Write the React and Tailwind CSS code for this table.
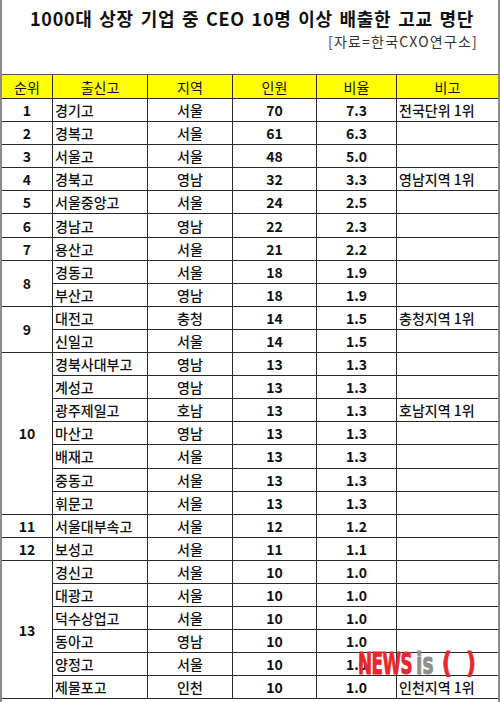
import React from "react";

const rows = [
  { rank: "1", span: 1, items: [["경기고", "서울", "70", "7.3", "전국단위 1위"]] },
  { rank: "2", span: 1, items: [["경복고", "서울", "61", "6.3", ""]] },
  { rank: "3", span: 1, items: [["서울고", "서울", "48", "5.0", ""]] },
  { rank: "4", span: 1, items: [["경북고", "영남", "32", "3.3", "영남지역 1위"]] },
  { rank: "5", span: 1, items: [["서울중앙고", "서울", "24", "2.5", ""]] },
  { rank: "6", span: 1, items: [["경남고", "영남", "22", "2.3", ""]] },
  { rank: "7", span: 1, items: [["용산고", "서울", "21", "2.2", ""]] },
  {
    rank: "8",
    span: 2,
    items: [
      ["경동고", "서울", "18", "1.9", ""],
      ["부산고", "영남", "18", "1.9", ""],
    ],
  },
  {
    rank: "9",
    span: 2,
    items: [
      ["대전고", "충청", "14", "1.5", "충청지역 1위"],
      ["신일고", "서울", "14", "1.5", ""],
    ],
  },
  {
    rank: "10",
    span: 7,
    items: [
      ["경북사대부고", "영남", "13", "1.3", ""],
      ["계성고", "영남", "13", "1.3", ""],
      ["광주제일고", "호남", "13", "1.3", "호남지역 1위"],
      ["마산고", "영남", "13", "1.3", ""],
      ["배재고", "서울", "13", "1.3", ""],
      ["중동고", "서울", "13", "1.3", ""],
      ["휘문고", "서울", "13", "1.3", ""],
    ],
  },
  { rank: "11", span: 1, items: [["서울대부속고", "서울", "12", "1.2", ""]] },
  { rank: "12", span: 1, items: [["보성고", "서울", "11", "1.1", ""]] },
  {
    rank: "13",
    span: 6,
    items: [
      ["경신고", "서울", "10", "1.0", ""],
      ["대광고", "서울", "10", "1.0", ""],
      ["덕수상업고", "서울", "10", "1.0", ""],
      ["동아고", "영남", "10", "1.0", ""],
      ["양정고", "서울", "10", "1.0", ""],
      ["제물포고", "인천", "10", "1.0", "인천지역 1위"],
    ],
  },
];

// spans used: row-span-1 row-span-2 row-span-6 row-span-7
const spanClass = {
  1: "row-span-1",
  2: "row-span-2",
  6: "row-span-6",
  7: "row-span-7",
};

const cell = "flex items-center border-b border-[#2a2a2a]";
const wmFont = { fontFamily: '"DejaVu Sans", sans-serif' };

export default function App() {
  return (
    <div
      className="relative w-[500px] h-[702px] bg-white text-[#111] overflow-hidden"
      style={{ fontFamily: '"Noto Sans CJK KR", "Noto Sans", sans-serif' }}
    >
      <div className="h-[702px] border-x-2 border-[#8a8a8a]">
        {/* title */}
        <div className="h-[75px] border-b border-[#555] flex flex-col">
          <h1 className="mt-[5px] pl-[4px] text-center text-[18px] font-bold leading-[26px] tracking-[0.7px] [word-spacing:2px]">
            1000대 상장 기업 중 CEO 10명 이상 배출한 고교 명단
          </h1>
          <div className="pr-[20px] text-right text-[14px] leading-[20px] tracking-[1.2px] text-[#333]">
            [자료=한국CXO연구소]
          </div>
        </div>

        {/* table */}
        <div className="grid grid-cols-[51px_95px_85px_84px_80px_101px] grid-rows-[24px] auto-rows-[23.1px] text-[14px] leading-none">
          {["순위", "출신고", "지역", "인원", "비율", "비고"].map((h, i) => (
            <div
              key={h}
              className={`${cell} h-[24px] justify-center bg-[#ffff00] ${i < 5 ? "border-r" : ""}`}
            >
              {h}
            </div>
          ))}

          {rows.map((g) => (
            <React.Fragment key={g.rank}>
              <div className={`${cell} border-r justify-center font-bold col-start-1 ${spanClass[g.span]}`}>
                {g.rank}
              </div>
              {g.items.map((r) => (
                <React.Fragment key={r[0]}>
                  <div className={`${cell} h-[23.1px] border-r col-start-2 pl-[2px] font-medium`}>{r[0]}</div>
                  <div className={`${cell} h-[23.1px] border-r justify-center font-medium`}>{r[1]}</div>
                  <div className={`${cell} h-[23.1px] border-r justify-center font-bold`}>{r[2]}</div>
                  <div className={`${cell} h-[23.1px] border-r justify-center font-bold`}>{r[3]}</div>
                  <div className={`${cell} h-[23.1px] pl-[2px] font-medium`}>{r[4]}</div>
                </React.Fragment>
              ))}
            </React.Fragment>
          ))}
        </div>
      </div>

      {/* watermark */}
      <div className="absolute left-[358px] top-[649px] flex items-center h-[30px] pointer-events-none">
        <span
          className="inline-block origin-left scale-x-[0.56] text-[30px] font-bold leading-none text-[#e8262c] tracking-[-1px] w-[58px] [-webkit-text-stroke:1px_#e8262c]"
          style={wmFont}
        >
          NEWS
        </span>
        <span
          className="inline-block origin-left scale-x-[0.62] text-[30px] font-bold leading-none text-[#8f8f8f] w-[26px] [-webkit-text-stroke:1px_#8f8f8f]"
          style={wmFont}
        >
          is
        </span>
        <span
          className="inline-block origin-left scale-x-[0.75] text-[28px] font-bold leading-none text-[#e8262c] whitespace-pre [-webkit-text-stroke:1px_#e8262c]"
          style={wmFont}
        >
          {"(  )"}
        </span>
      </div>
    </div>
  );
}
